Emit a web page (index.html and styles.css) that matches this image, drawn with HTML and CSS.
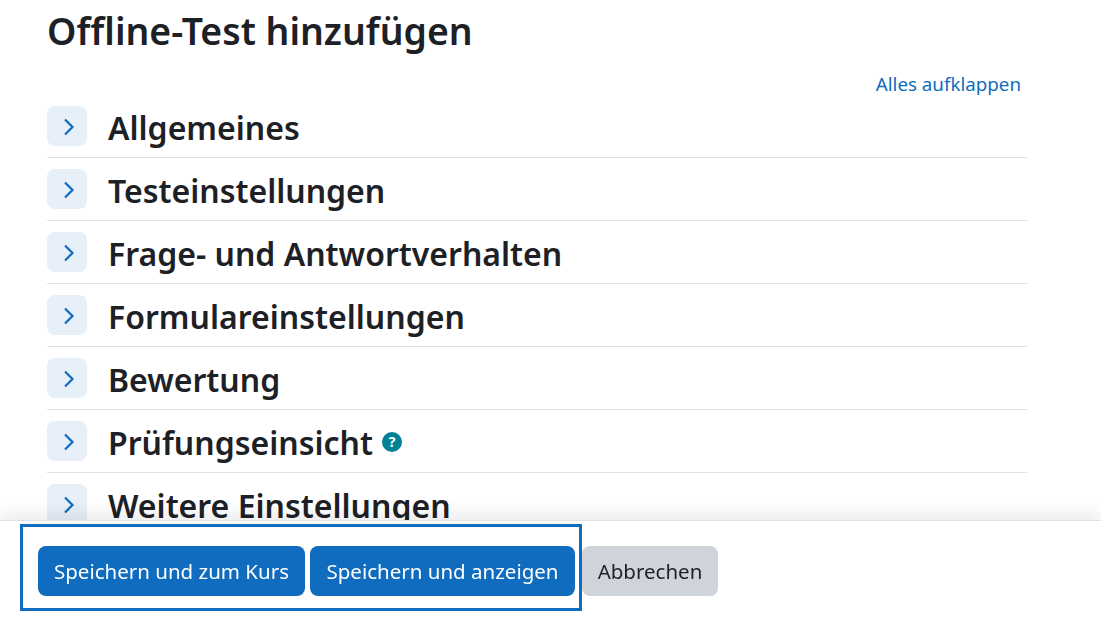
FILE: index.html
```html
<!DOCTYPE html>
<html lang="de">
<head>
    <meta charset="UTF-8">
    <meta name="viewport" content="width=device-width, initial-scale=1.0">
    <title>Offline-Test hinzufügen</title>
    <link rel="stylesheet" href="styles.css">
</head>
<body>
    <div class="content">
        <h1>Offline-Test hinzufügen</h1>
        <div class="expand-row"><a href="#" class="expand-link">Alles aufklappen</a></div>

        <div class="section">
            <button class="toggle"><svg viewBox="0 0 12 18" width="12" height="18"><path d="M2 1.5 9.5 9 2 16.5" /></svg></button>
            <h2>Allgemeines</h2>
        </div>
        <div class="section">
            <button class="toggle"><svg viewBox="0 0 12 18" width="12" height="18"><path d="M2 1.5 9.5 9 2 16.5" /></svg></button>
            <h2>Testeinstellungen</h2>
        </div>
        <div class="section">
            <button class="toggle"><svg viewBox="0 0 12 18" width="12" height="18"><path d="M2 1.5 9.5 9 2 16.5" /></svg></button>
            <h2>Frage- und Antwortverhalten</h2>
        </div>
        <div class="section">
            <button class="toggle"><svg viewBox="0 0 12 18" width="12" height="18"><path d="M2 1.5 9.5 9 2 16.5" /></svg></button>
            <h2>Formulareinstellungen</h2>
        </div>
        <div class="section">
            <button class="toggle"><svg viewBox="0 0 12 18" width="12" height="18"><path d="M2 1.5 9.5 9 2 16.5" /></svg></button>
            <h2>Bewertung</h2>
        </div>
        <div class="section">
            <button class="toggle"><svg viewBox="0 0 12 18" width="12" height="18"><path d="M2 1.5 9.5 9 2 16.5" /></svg></button>
            <h2>Prüfungseinsicht</h2>
            <span class="help">?</span>
        </div>
        <div class="section">
            <button class="toggle"><svg viewBox="0 0 12 18" width="12" height="18"><path d="M2 1.5 9.5 9 2 16.5" /></svg></button>
            <h2>Weitere Einstellungen</h2>
        </div>
    </div>

    <div class="sticky-footer">
        <div class="highlight">
            <button class="btn btn-primary btn-kurs">Speichern und zum Kurs</button>
            <button class="btn btn-primary btn-anzeigen">Speichern und anzeigen</button>
        </div>
        <button class="btn btn-secondary">Abbrechen</button>
    </div>
</body>
</html>
```

FILE: styles.css
```css
html, body {
    height: 100%;
}

body {
    font-family: 'Noto Sans', 'Open Sans', sans-serif;
    margin: 0;
    background: white;
    color: #1d2125;
    overflow: hidden;
}

.content {
    width: 980px;
    margin-left: 47px;
}

h1 {
    font-size: 37.4px;
    font-weight: 600;
    line-height: 40px;
    margin: 0;
    padding-top: 11px;
}

.expand-row {
    display: flex;
    justify-content: flex-end;
    padding: 22px 6px 0 0;
    height: 22px;
}

.expand-link {
    color: #0f6cbf;
    font-size: 18.75px;
    line-height: 22px;
    text-decoration: none;
}

.section {
    display: flex;
    align-items: center;
    height: 62px;
    border-bottom: 1px solid #dee2e6;
}

.toggle {
    width: 40px;
    height: 40px;
    flex-shrink: 0;
    margin-top: -1px;
    padding: 2px 0 0 3px;
    border: none;
    border-radius: 8px;
    background: #e7eff8;
    display: flex;
    align-items: center;
    justify-content: center;
}

.toggle svg {
    fill: none;
    stroke: #0f6cbf;
    stroke-width: 2.2;
}

h2 {
    font-size: 32px;
    font-weight: 600;
    line-height: 40px;
    margin: 3px 0 0 21px;
}

.help {
    width: 20px;
    height: 20px;
    margin: 2px 0 0 9px;
    border-radius: 50%;
    background: #008196;
    color: white;
    font-size: 14px;
    font-weight: 700;
    line-height: 20px;
    text-align: center;
}

/* Leiste liegt ueber dem Formular */
.sticky-footer {
    position: fixed;
    left: 0;
    right: 0;
    bottom: 0;
    height: 97px;
    background: white;
    border-top: 1px solid #dee2e6;
    box-shadow: 0 -8px 14px rgba(0, 0, 0, 0.07);
    display: flex;
    align-items: flex-start;
    padding: 3px 0 0 20px;
    box-sizing: border-box;
}

.highlight {
    display: flex;
    gap: 5px;
    border: 3px solid #0f6cbf;
    padding: 19px 4px 12px 15px;
    box-sizing: border-box;
    width: 562px;
    height: 87px;
}

.btn {
    height: 50px;
    padding: 0;
    border: none;
    border-radius: 8px;
    font-family: inherit;
    font-size: 20.5px;
}

.btn-primary {
    background: #0f6cbf;
    color: white;
}

.btn-kurs {
    width: 267px;
}

.btn-anzeigen {
    width: 265px;
}

.btn-secondary {
    width: 136px;
    margin-top: 22px;
    background: #ced4da;
    color: #1d2125;
}
```
